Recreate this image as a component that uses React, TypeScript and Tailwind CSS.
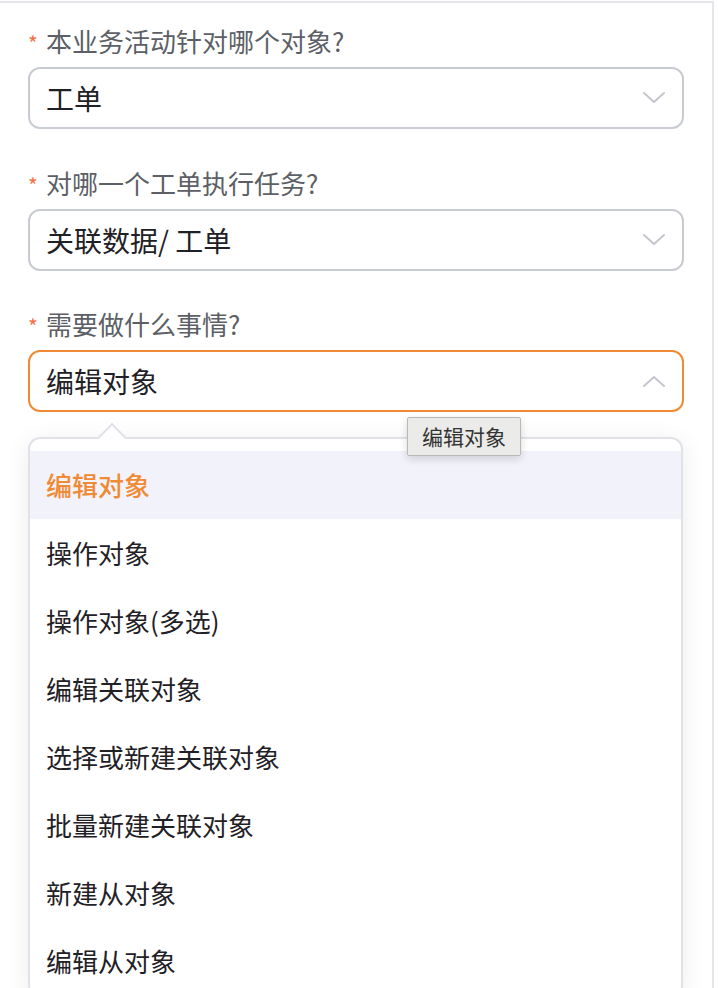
import React from 'react';

const font = { fontFamily: '"Noto Sans CJK SC", "Noto Sans", sans-serif' };

const options = [
  '编辑对象',
  '操作对象',
  '操作对象(多选)',
  '编辑关联对象',
  '选择或新建关联对象',
  '批量新建关联对象',
  '新建从对象',
  '编辑从对象',
];

function Chevron({ up = false }: { up?: boolean }) {
  return (
    <svg width="24" height="14" viewBox="0 0 24 14" fill="none" className="shrink-0">
      <path
        d={up ? 'M2 12 L12 3 L22 12' : 'M2 2 L12 11 L22 2'}
        stroke="#c3c6cd"
        strokeWidth="2"
        strokeLinecap="round"
        strokeLinejoin="round"
      />
    </svg>
  );
}

function Label({ text }: { text: string }) {
  return (
    <div className="flex h-[36px] items-center">
      <span className="w-[18px] text-[21px] leading-none text-[#f2714a] pt-[5px]">*</span>
      <span className="text-[26px] leading-none text-[#5c5f66]">{text}</span>
    </div>
  );
}

function SelectBox({ value, open = false }: { value: string; open?: boolean }) {
  return (
    <div
      className={
        'mt-[8px] flex h-[62px] items-center justify-between rounded-[12px] border-2 pl-[16px] pr-[16px] ' +
        (open ? 'border-[#f08a34]' : 'border-[#c8cbd2]')
      }
    >
      <span className="text-[28px] leading-none text-[#1f2126]">{value}</span>
      <Chevron up={open} />
    </div>
  );
}

export default function App() {
  return (
    <div style={font} className="relative h-[988px] w-[718px] overflow-hidden bg-white">
      <div className="mt-[1px] h-[987px] w-[714px] border-t-2 border-r-2 border-[#e4e6ea] px-[28px] pt-[20px]">
        <Label text="本业务活动针对哪个对象?" />
        <SelectBox value="工单" />

        <div className="mt-[36px]">
          <Label text="对哪一个工单执行任务?" />
          <SelectBox value="关联数据/ 工单" />
        </div>

        <div className="mt-[35px]">
          <Label text="需要做什么事情?" />
          <SelectBox value="编辑对象" open />
        </div>

        {/* dropdown */}
        <div className="relative mt-[25px] w-[655px]">
          <div className="absolute left-[74px] top-[-10px] z-10 h-[20px] w-[20px] rotate-45 border-l-2 border-t-2 border-[#e0e2e7] bg-white" />
          <div className="relative rounded-[12px] border-2 border-[#e0e2e7] bg-white pt-[12px] shadow-[0_4px_24px_rgba(0,0,0,0.08)]">
            {options.map((o, i) => (
              <div
                key={o}
                className={
                  'flex h-[68px] items-center px-[16px] text-[26px] leading-none ' +
                  (i === 0 ? 'bg-[#f2f3fa] font-medium text-[#f08a34]' : 'text-[#1f2126]')
                }
              >
                {o}
              </div>
            ))}
          </div>
        </div>
      </div>

      {/* tooltip */}
      <div className="absolute left-[407px] top-[417px] flex h-[39px] w-[114px] items-center justify-center rounded-[2px] border border-[#b8b8b6] bg-[#ebebe9] text-[21px] leading-none text-[#333333] shadow-[0_3px_8px_rgba(0,0,0,0.15)]">
        编辑对象
      </div>
    </div>
  );
}
